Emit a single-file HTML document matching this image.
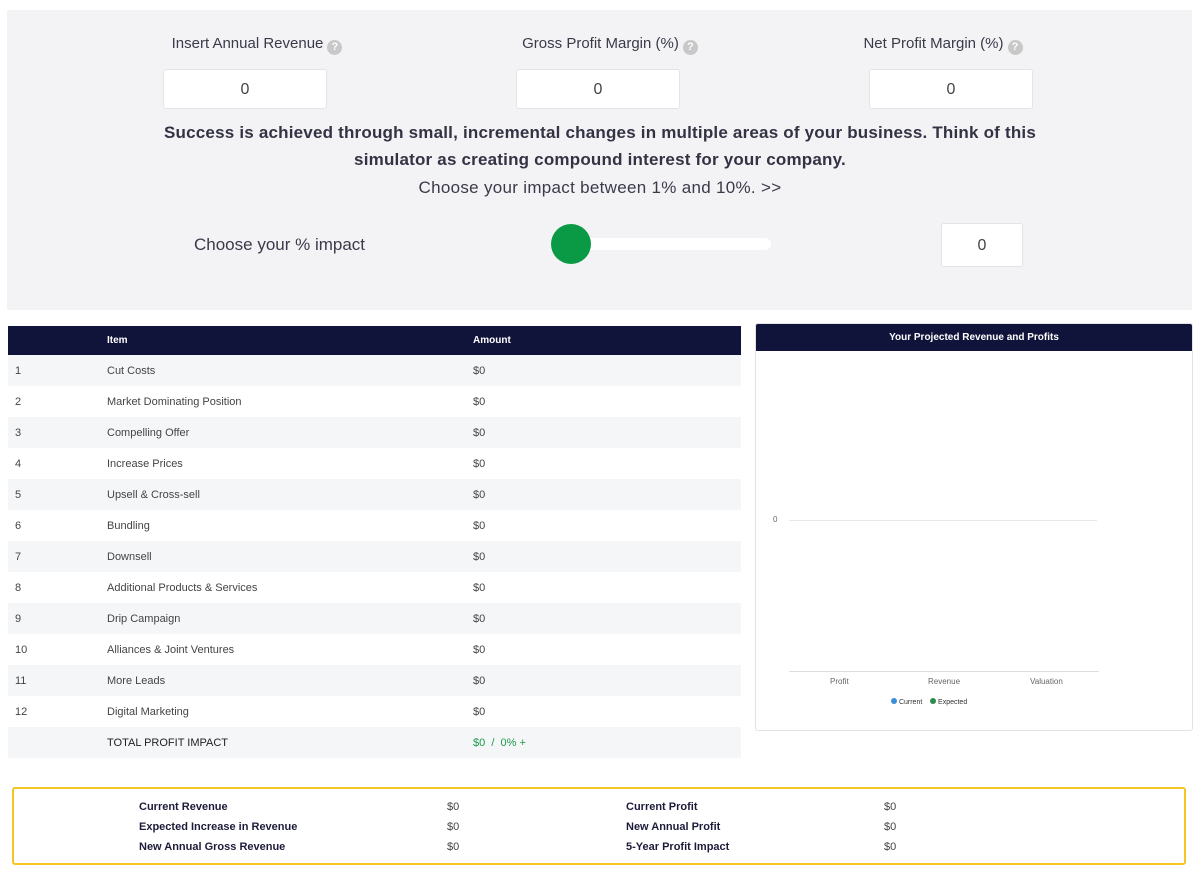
<!DOCTYPE html>
<html><head><meta charset="utf-8"><style>
*{box-sizing:border-box;margin:0;padding:0}
body{width:1200px;height:872px;background:#fff;font-family:"Liberation Sans",sans-serif;position:relative;overflow:hidden;color:#333}
.abs{position:absolute}
.top{left:7px;top:10px;width:1185px;height:300px;background:#f3f3f6}
.lbl{font-size:15px;color:#3a3a4a;text-align:center;width:240px}
.q{display:inline-block;width:15px;height:15px;border-radius:50%;background:#c8c8c8;color:#fff;font-size:11px;line-height:15px;text-align:center;font-weight:bold;vertical-align:-2px;margin-left:4px}
.inp{background:#fff;border:1px solid #e4e4e8;border-radius:3px;width:164px;height:40px;text-align:center;line-height:40px;font-size:16px;color:#444}
.row{left:8px;width:733px;height:31px;font-size:11px;color:#444;line-height:33px}
.row span{position:absolute}
.bx{font-size:11px;line-height:20px}
</style></head><body>
<div class="abs top"></div>
<div class="abs lbl" style="left:137px;top:35px">Insert Annual Revenue<span class="q">?</span></div>
<div class="abs lbl" style="left:490px;top:35px">Gross Profit Margin (%)<span class="q">?</span></div>
<div class="abs lbl" style="left:823px;top:35px">Net Profit Margin (%)<span class="q">?</span></div>
<div class="abs inp" style="left:163px;top:69px">0</div>
<div class="abs inp" style="left:516px;top:69px">0</div>
<div class="abs inp" style="left:869px;top:69px">0</div>
<div class="abs" style="left:100px;top:119px;width:1000px;text-align:center;font-size:17px;font-weight:bold;color:#333344;line-height:27px;letter-spacing:0.2px">Success is achieved through small, incremental changes in multiple areas of your business. Think of this<br>simulator as creating compound interest for your company.</div>
<div class="abs" style="left:100px;top:178px;width:1000px;text-align:center;font-size:17px;color:#3a3a4a;letter-spacing:0.3px">Choose your impact between 1% and 10%. &gt;&gt;</div>
<div class="abs" style="left:194px;top:235px;font-size:17px;color:#3a3a4a">Choose your % impact</div>
<div class="abs" style="left:560px;top:238px;width:211px;height:12px;background:#fff;border-radius:6px"></div>
<div class="abs" style="left:551px;top:224px;width:40px;height:40px;border-radius:50%;background:#0a9a45"></div>
<div class="abs inp" style="left:941px;top:223px;width:82px;height:44px;line-height:44px">0</div>

<div class="abs" style="left:8px;top:326px;width:733px;height:29px;background:#10133a;color:#fff;font-size:10px;font-weight:bold;line-height:30px"><span class="abs" style="left:99px">Item</span><span class="abs" style="left:465px">Amount</span></div>
<div class="abs row" style="top:355px;background:#f5f6f8"><span style="left:7px">1</span><span style="left:99px">Cut Costs</span><span style="left:465px">$0</span></div>
<div class="abs row" style="top:386px"><span style="left:7px">2</span><span style="left:99px">Market Dominating Position</span><span style="left:465px">$0</span></div>
<div class="abs row" style="top:417px;background:#f5f6f8"><span style="left:7px">3</span><span style="left:99px">Compelling Offer</span><span style="left:465px">$0</span></div>
<div class="abs row" style="top:448px"><span style="left:7px">4</span><span style="left:99px">Increase Prices</span><span style="left:465px">$0</span></div>
<div class="abs row" style="top:479px;background:#f5f6f8"><span style="left:7px">5</span><span style="left:99px">Upsell &amp; Cross-sell</span><span style="left:465px">$0</span></div>
<div class="abs row" style="top:510px"><span style="left:7px">6</span><span style="left:99px">Bundling</span><span style="left:465px">$0</span></div>
<div class="abs row" style="top:541px;background:#f5f6f8"><span style="left:7px">7</span><span style="left:99px">Downsell</span><span style="left:465px">$0</span></div>
<div class="abs row" style="top:572px"><span style="left:7px">8</span><span style="left:99px">Additional Products &amp; Services</span><span style="left:465px">$0</span></div>
<div class="abs row" style="top:603px;background:#f5f6f8"><span style="left:7px">9</span><span style="left:99px">Drip Campaign</span><span style="left:465px">$0</span></div>
<div class="abs row" style="top:634px"><span style="left:7px">10</span><span style="left:99px">Alliances &amp; Joint Ventures</span><span style="left:465px">$0</span></div>
<div class="abs row" style="top:665px;background:#f5f6f8"><span style="left:7px">11</span><span style="left:99px">More Leads</span><span style="left:465px">$0</span></div>
<div class="abs row" style="top:696px"><span style="left:7px">12</span><span style="left:99px">Digital Marketing</span><span style="left:465px">$0</span></div>
<div class="abs row" style="top:727px;background:#f5f6f8"><span style="left:99px;color:#222">TOTAL PROFIT IMPACT</span><span style="left:465px;color:#1a9a4a">$0 &nbsp;/ &nbsp;0% +</span></div>

<div class="abs" style="left:755px;top:323px;width:438px;height:408px;border:1px solid #e2e2e6;border-radius:3px;overflow:hidden">
<div style="height:27px;background:#10133a;color:#fff;font-size:10px;font-weight:bold;text-align:center;line-height:27px">Your Projected Revenue and Profits</div>
<div class="abs" style="left:17px;top:191px;font-size:8px;color:#666">0</div>
<div class="abs" style="left:33px;top:196px;width:308px;height:1px;background:#e8e8e8"></div>
<div class="abs" style="left:33px;top:347px;width:310px;height:1px;background:#ddd"></div>
<div class="abs" style="left:74px;top:353px;font-size:8px;color:#666">Profit</div>
<div class="abs" style="left:172px;top:353px;font-size:8px;color:#666">Revenue</div>
<div class="abs" style="left:274px;top:353px;font-size:8px;color:#666">Valuation</div>
<div class="abs" style="left:135px;top:374px;font-size:7px;color:#333"><span style="display:inline-block;width:6px;height:6px;border-radius:50%;background:#3a8fd9"></span> Current &nbsp;&nbsp; <span style="display:inline-block;width:6px;height:6px;border-radius:50%;background:#2e8b4a"></span> Expected</div>
</div>

<div class="abs" style="left:12px;top:787px;width:1174px;height:78px;border:2px solid #f3c623;border-radius:3px"></div>
<div class="abs bx" style="left:139px;top:797px;font-weight:bold;color:#1c1c3a">Current Revenue<br>Expected Increase in Revenue<br>New Annual Gross Revenue</div>
<div class="abs bx" style="left:447px;top:797px;color:#444">$0<br>$0<br>$0</div>
<div class="abs bx" style="left:626px;top:797px;font-weight:bold;color:#1c1c3a">Current Profit<br>New Annual Profit<br>5-Year Profit Impact</div>
<div class="abs bx" style="left:884px;top:797px;color:#444">$0<br>$0<br>$0</div>
</body></html>
